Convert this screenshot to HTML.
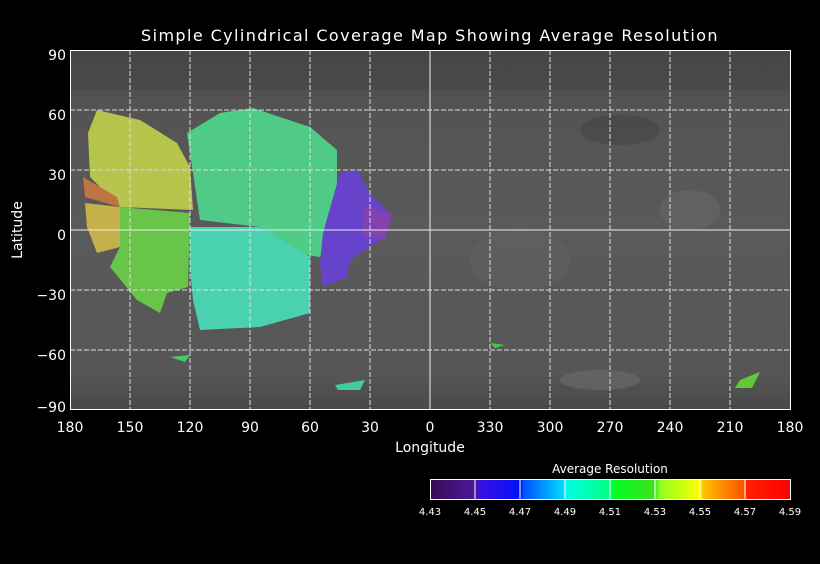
<!DOCTYPE html>
<html><head><style>
body{margin:0;background:#000;width:820px;height:560px;overflow:hidden;font-family:"DejaVu Sans","Liberation Sans",sans-serif;}
svg text{fill:#fff;font-family:"DejaVu Sans","Liberation Sans",sans-serif;}
</style></head><body>
<svg width="820" height="560" viewBox="0 0 820 560" xmlns="http://www.w3.org/2000/svg">
<defs>
<linearGradient id="bg" x1="0" y1="0" x2="0" y2="1">
<stop offset="0" stop-color="#444"/><stop offset="0.15" stop-color="#535353"/><stop offset="0.5" stop-color="#5a5a5a"/><stop offset="0.9" stop-color="#565656"/><stop offset="1" stop-color="#484848"/>
</linearGradient>
<linearGradient id="cb" x1="0" y1="0" x2="1" y2="0">
<stop offset="0" stop-color="#3a0a55"/><stop offset="0.125" stop-color="#4a1a9a"/><stop offset="0.14" stop-color="#3a10e0"/><stop offset="0.25" stop-color="#0010ff"/><stop offset="0.26" stop-color="#0050ff"/><stop offset="0.375" stop-color="#00e0ff"/><stop offset="0.38" stop-color="#00ffe0"/><stop offset="0.5" stop-color="#00ff80"/><stop offset="0.51" stop-color="#00ff20"/><stop offset="0.625" stop-color="#40e020"/><stop offset="0.64" stop-color="#90ff20"/><stop offset="0.75" stop-color="#ffff00"/><stop offset="0.76" stop-color="#ffc000"/><stop offset="0.875" stop-color="#ff5000"/><stop offset="0.88" stop-color="#ff2000"/><stop offset="1" stop-color="#ff0000"/>
</linearGradient>
</defs>
<text x="430" y="41" font-size="16" text-anchor="middle" letter-spacing="1.4">Simple Cylindrical Coverage Map Showing Average Resolution</text>
<rect x="70" y="50" width="720" height="360" fill="url(#bg)"/>
<rect x="70" y="50" width="720" height="40" fill="#484848" opacity="0.6"/>
<ellipse cx="600" cy="380" rx="40" ry="10" fill="#777" opacity="0.4"/>
<ellipse cx="690" cy="210" rx="30" ry="20" fill="#6a6a6a" opacity="0.5"/>
<ellipse cx="620" cy="130" rx="40" ry="15" fill="#444" opacity="0.6"/>
<ellipse cx="520" cy="260" rx="50" ry="30" fill="#666" opacity="0.4"/>
<g opacity="0.85">
<polygon points="97,110 140,120 177,143 190,167 193,210 120,207 90,177 88,133" fill="#c8d84a"/>
<polygon points="83,177 117,197 120,207 85,197" fill="#d07a40"/>
<polygon points="85,203 120,207 120,247 97,253 87,227" fill="#d8c048"/>
<polygon points="120,207 190,213 188,287 167,293 160,313 137,300 110,267 120,247" fill="#6cd848"/>
<polygon points="187,133 220,113 253,108 310,127 337,150 337,200 320,257 293,253 260,227 200,220 193,173" fill="#4ee090"/>
<polygon points="190,227 260,227 310,257 310,313 260,327 200,330 193,300 190,267" fill="#48e8c0"/>
<polygon points="340,173 357,170 370,193 393,217 380,240 350,260 347,277 323,287 320,263 323,233" fill="#6a40e0"/>
<polygon points="365,205 392,215 385,240 362,235" fill="#8a40c0"/>
<polygon points="740,380 760,372 752,388 735,388" fill="#60e030"/>
<polygon points="335,385 365,380 360,390 338,390" fill="#40e0b0"/>
<polygon points="170,357 190,355 185,362" fill="#40e070"/>
<polygon points="490,343 505,345 495,348" fill="#40e040"/>
</g>
<g stroke="#ddd" stroke-width="1" stroke-dasharray="5,2" fill="none">
<path d="M130 50V410M190 50V410M250 50V410M310 50V410M370 50V410M430 50V410M490 50V410M550 50V410M610 50V410M670 50V410M730 50V410"/>
<path d="M70 110H790M70 170H790M70 290H790M70 350H790"/>
</g>
<path d="M70 230H790M430 50V410" stroke="#eee" stroke-width="1"/>
<rect x="70.5" y="50.5" width="720" height="359" fill="none" stroke="#fff"/>
<g font-size="14" text-anchor="end">
<text x="66" y="60">90</text><text x="66" y="120">60</text><text x="66" y="180">30</text><text x="66" y="240">0</text><text x="66" y="300">−30</text><text x="66" y="360">−60</text><text x="66" y="412">−90</text>
</g>
<g font-size="14" text-anchor="middle">
<text x="70" y="432">180</text><text x="130" y="432">150</text><text x="190" y="432">120</text><text x="250" y="432">90</text><text x="310" y="432">60</text><text x="370" y="432">30</text><text x="430" y="432">0</text><text x="490" y="432">330</text><text x="550" y="432">300</text><text x="610" y="432">270</text><text x="670" y="432">240</text><text x="730" y="432">210</text><text x="790" y="432">180</text>
</g>
<text x="430" y="452" font-size="14" text-anchor="middle">Longitude</text>
<text x="22" y="230" font-size="14" text-anchor="middle" transform="rotate(-90 22 230)">Latitude</text>
<text x="610" y="473" font-size="12" text-anchor="middle">Average Resolution</text>
<rect x="430" y="479" width="360" height="20" fill="url(#cb)"/>
<g stroke="#fff" stroke-width="1"><path d="M475 479V499M520 479V499M565 479V499M610 479V499M655 479V499M700 479V499M745 479V499"/></g>
<rect x="430.5" y="479.5" width="360" height="20" fill="none" stroke="#fff"/>
<g font-size="10" text-anchor="middle">
<text x="430" y="515">4.43</text><text x="475" y="515">4.45</text><text x="520" y="515">4.47</text><text x="565" y="515">4.49</text><text x="610" y="515">4.51</text><text x="655" y="515">4.53</text><text x="700" y="515">4.55</text><text x="745" y="515">4.57</text><text x="790" y="515">4.59</text>
</g>
</svg>
</body></html>
